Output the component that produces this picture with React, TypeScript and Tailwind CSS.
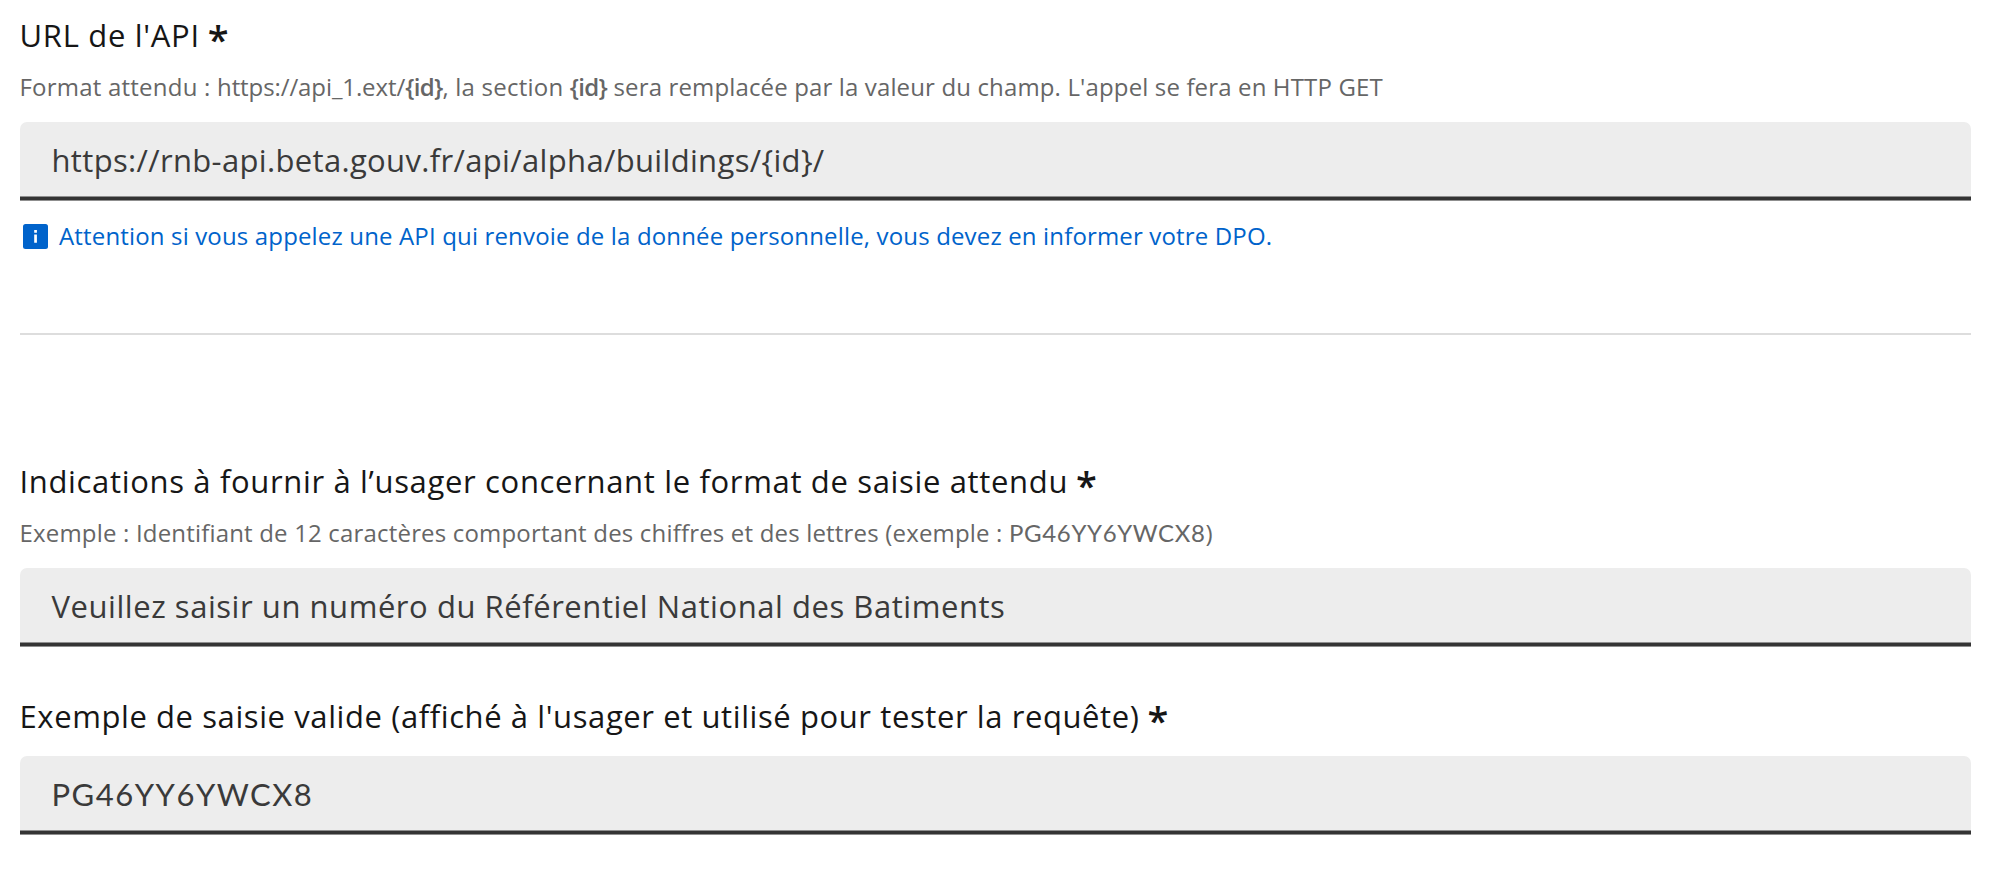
import type { ReactNode } from "react"

function Label({ children, className = "" }: { children: ReactNode; className?: string }) {
  return (
    <label className={`flex h-12 items-start whitespace-pre text-[31px] leading-[48px] text-[#161616] ${className}`}>
      <span>{children}</span>
      <span className="relative top-[4px] ml-[8px] text-[38px] font-semibold tracking-normal">*</span>
    </label>
  )
}

function Hint({ children, className = "" }: { children: ReactNode; className?: string }) {
  return <p className={`mt-2 whitespace-pre text-[24px] leading-[40px] text-[#666666] ${className}`}>{children}</p>
}

function Field({ children, className = "" }: { children: ReactNode; className?: string }) {
  return (
    <div className={className}>
      <div className="h-[74px] whitespace-pre rounded-t-[7px] bg-[#ededed] pl-[32px] text-[31px] leading-[76px] text-[#3a3a3a]">
        {children}
      </div>
      <div className="h-[5px] border-y border-[#8f8f8f] bg-[#343434]" />
    </div>
  )
}

export default function App() {
  return (
    <main className="flex h-[870px] flex-col bg-white pl-[19.5px] pr-[29.5px] pt-[11px] font-['Open_Sans',sans-serif]">
      {/* API URL */}
      <Label className="tracking-[0.7px]">URL de l'API</Label>
      <Hint className="tracking-[0.14px]">
        <span className="tracking-[0.22px]">Format attendu : </span>
        <span className="tracking-[-0.1px]">https://api_1.ext/</span>
        <strong className="font-semibold tracking-[-0.7px]">{"{id}"}</strong>
        <span className="tracking-[0.22px]">, la section </span>
        <strong className="font-semibold tracking-[-0.7px]">{"{id}"}</strong> sera remplacée par la valeur du champ. L'appel se fera en HTTP GET
      </Hint>
      <Field className="mt-[15px] tracking-[0.34px]">{"https://rnb-api.beta.gouv.fr/api/alpha/buildings/{id}/"}</Field>
      <div className="mt-[15px] flex h-10 items-center text-[24px] leading-[40px] tracking-[0.155px] text-[#0063cb]">
        <svg className="ml-[3px] mr-[11.5px] size-[25px]" viewBox="0 0 25 25">
          <rect width="25" height="25" rx="2.5" fill="#0063cb" />
          <path d="M11.2 6h2.7v2.7h-2.7zM11.2 10.5h2.7v8.3h-2.7z" fill="#fff" />
        </svg>
        <span className="whitespace-pre">
          Attention si vous appelez une API qui renvoie de la donnée personnelle, vous devez en informer votre DPO.
        </span>
      </div>

      <hr className="mt-[77px] border-t-2 border-[#dddddd]" />

      {/* Expected format */}
      <Label className="mt-[122px] tracking-[0.66px]">Indications à fournir à l’usager concernant le format de saisie attendu</Label>
      <Hint className="tracking-[0.18px]">
        Exemple : Identifiant de 12 caractères comportant des chiffres et des lettres (exemple :{" "}
        <span className="font-['Lato'] tracking-[0.65px]">PG46YY6YWCX8</span>)
      </Hint>
      <Field className="mt-[15px] tracking-[0.55px]">Veuillez saisir un numéro du Référentiel National des Batiments</Field>

      {/* Valid example */}
      <Label className="mt-[45px] tracking-[0.59px]">
        Exemple de saisie valide (affiché à l'usager et utilisé pour tester la requête)
      </Label>
      <Field className="mt-4 font-['Lato'] tracking-[1.5px]">PG46YY6YWCX8</Field>
    </main>
  )
}
